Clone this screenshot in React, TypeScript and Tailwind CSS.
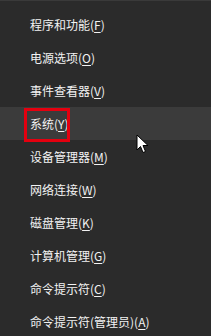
const items: { label: string; key: string; tail?: string }[] = [
  { label: "程序和功能(", key: "F" },
  { label: "电源选项(", key: "O" },
  { label: "事件查看器(", key: "V" },
  { label: "系统(", key: "Y" },
  { label: "设备管理器(", key: "M" },
  { label: "网络连接(", key: "W" },
  { label: "磁盘管理(", key: "K" },
  { label: "计算机管理(", key: "G" },
  { label: "命令提示符(", key: "C" },
  { label: "命令提示符(管理员)(", key: "A" },
];

function Cursor() {
  return (
    <svg
      className="absolute left-[136px] top-[134px]"
      width="13"
      height="20"
      viewBox="0 0 13 20"
    >
      <path
        d="M1 1 L1 16 L4.5 12.5 L7 18.5 L9.5 17.5 L7 11.5 L12 11.5 Z"
        fill="#ffffff"
        stroke="#000000"
        strokeWidth="1"
        strokeLinejoin="miter"
      />
    </svg>
  );
}

export default function App() {
  return (
    <div className="relative h-[336px] w-[211px] overflow-hidden bg-[#2b2b2b] pt-[8px] font-['Microsoft_YaHei','Noto_Sans_CJK_SC',sans-serif] text-[12px] text-[#f2f2f2]">
      <div className="absolute inset-x-0 top-0 h-px bg-[#3a3a3a]" />
      {items.map((it, i) => (
        <div
          key={it.key}
          className={`relative flex h-[33px] items-center pl-[30px] ${i === 3 ? "bg-[#3b3b3b]" : ""}`}
        >
          <span className="whitespace-nowrap leading-none">
            {it.label}
            <span className="underline underline-offset-2">{it.key}</span>)
          </span>
          {i === 3 && (
            <div className="absolute left-[24px] top-[1px] h-[34px] w-[46px] border-[3px] border-[#e4000f]" />
          )}
        </div>
      ))}
      <Cursor />
    </div>
  );
}
